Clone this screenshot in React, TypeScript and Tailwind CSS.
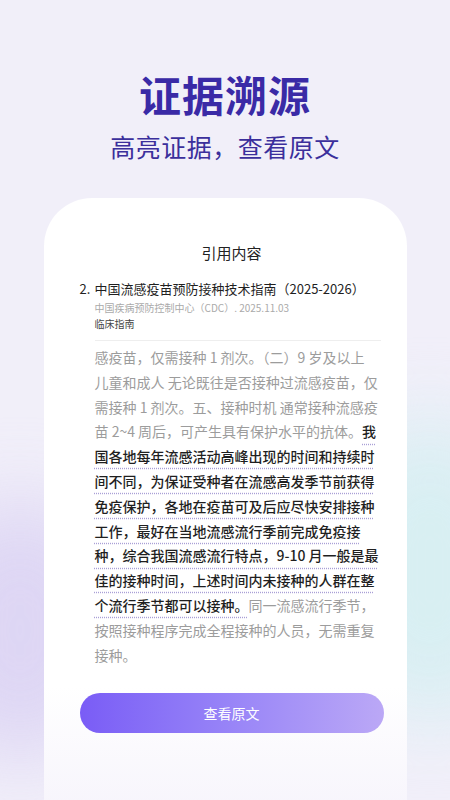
import React from 'react';

const font = { fontFamily: '"Noto Sans CJK SC", "Noto Sans", sans-serif' };

const Mark: React.FC<{ children: React.ReactNode }> = ({ children }) => (
  <span className="text-[#1f1f1f] font-medium underline decoration-dotted decoration-[#a99fd6] underline-offset-[6px]">
    {children}
  </span>
);

const App: React.FC = () => {
  return (
    <div className="relative w-full h-[800px] overflow-hidden bg-[#f1eff9]" style={font}>
      {/* soft colour washes at the bottom corners */}
      <div className="absolute left-[-80px] bottom-[40px] w-[200px] h-[260px] rounded-full bg-[#d9d0f3] blur-[40px] opacity-80" />
      <div className="absolute right-[-80px] bottom-[80px] w-[200px] h-[300px] rounded-full bg-[#d6eff2] blur-[40px] opacity-90" />

      <div className="relative flex flex-col items-center">
        <h1 className="mt-[68px] text-[42px] leading-[52px] font-bold text-[#3a2aa6] tracking-[1px]">证据溯源</h1>
        <p className="mt-[10px] text-[25px] leading-[32px] text-[#3b2f9c] tracking-[0.5px]">高亮证据，查看原文</p>

        <div className="mt-[36px] w-[363px] h-[610px] rounded-t-[48px] bg-gradient-to-b from-white from-80% to-[#f7f5fc] pl-[36px] pr-[23px]">
          <div className="pt-[43px] text-center text-[15px] leading-[24px] text-[#222]">引用内容</div>

          <div className="mt-[14px] flex">
            <span className="w-[15px] text-[13px] leading-[20px] text-[#222]">2.</span>
            <div className="flex-1">
              <div className="text-[13px] leading-[20px] text-[#1f1f1f]">中国流感疫苗预防接种技术指南（2025-2026）</div>
              <div className="mt-[1px] text-[10px] leading-[16px] text-[#aaaaaa]">中国疾病预防控制中心（CDC）. 2025.11.03</div>
              <div className="text-[10px] leading-[16px] text-[#444]">临床指南</div>
              <div className="mt-[8px] h-px bg-[#eeeeee] mr-[3px]" />
              <p className="mt-[4px] text-[14px] leading-[24.8px] text-[#9c9c9c] whitespace-nowrap">
                感疫苗，仅需接种 1 剂次。（二）9 岁及以上<br />
                儿童和成人 无论既往是否接种过流感疫苗，仅<br />
                需接种 1 剂次。五、接种时机 通常接种流感疫<br />
                苗 2~4 周后，可产生具有保护水平的抗体。
                <Mark>
                  我<br />
                  国各地每年流感活动高峰出现的时间和持续时<br />
                  间不同，为保证受种者在流感高发季节前获得<br />
                  免疫保护，各地在疫苗可及后应尽快安排接种<br />
                  工作，最好在当地流感流行季前完成免疫接<br />
                  种，综合我国流感流行特点，9-10 月一般是最<br />
                  佳的接种时间，上述时间内未接种的人群在整<br />
                  个流行季节都可以接种。
                </Mark>
                同一流感流行季节，<br />
                按照接种程序完成全程接种的人员，无需重复<br />
                接种。
              </p>
            </div>
          </div>

          <button className="mt-[26px] w-[304px] h-[40px] rounded-full bg-gradient-to-r from-[#7a5cf6] to-[#bba8f6] text-white text-[14px]">
            查看原文
          </button>
        </div>
      </div>
    </div>
  );
};

export default App;
